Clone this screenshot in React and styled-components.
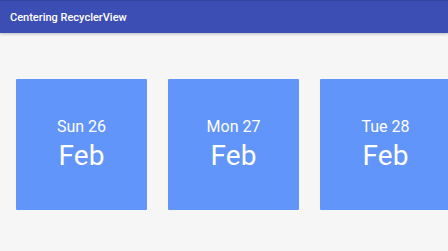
import styled, { createGlobalStyle } from "styled-components";

const GlobalStyle = createGlobalStyle`
  html, body {
    margin: 0;
    padding: 0;
    background: #f6f6f6;
    font-family: Roboto, "Liberation Sans", sans-serif;
  }
`;

const days = [
  { day: "Sun 26", month: "Feb" },
  { day: "Mon 27", month: "Feb" },
  { day: "Tue 28", month: "Feb" },
];

export default function App() {
  return (
    <>
      <GlobalStyle />
      <Screen>
        <Toolbar>Centering RecyclerView</Toolbar>
        <Strip>
          {days.map((d) => (
            <DayCard key={d.day}>
              <DayLabel>{d.day}</DayLabel>
              <MonthLabel>{d.month}</MonthLabel>
            </DayCard>
          ))}
        </Strip>
      </Screen>
    </>
  );
}

const Screen = styled.div`
  width: 448px;
  height: 251px;
  overflow: hidden;
  background: #f6f6f6;
`;

const Toolbar = styled.div`
  height: 33px;
  box-sizing: border-box;
  border-top: 1px solid #3343a0;
  background: #3c4db3;
  color: #fff;
  font-size: 11px;
  font-weight: 500;
  display: flex;
  align-items: center;
  padding-left: 10px;
  box-shadow: 0 1px 3px rgba(0, 0, 0, 0.25);
  position: relative;
`;

const Strip = styled.div`
  display: flex;
  gap: 21px;
  padding: 46px 0 0 16px;
`;

const DayCard = styled.div`
  flex: 0 0 131px;
  height: 131px;
  background: #6195fa;
  border-radius: 1px;
  color: #fff;
  display: flex;
  flex-direction: column;
  align-items: center;
  justify-content: center;
  padding-top: 2px;
  box-sizing: border-box;
`;

const DayLabel = styled.div`
  font-size: 16px;
  line-height: 20px;
`;

const MonthLabel = styled.div`
  font-size: 28px;
  line-height: 38px;
`;
